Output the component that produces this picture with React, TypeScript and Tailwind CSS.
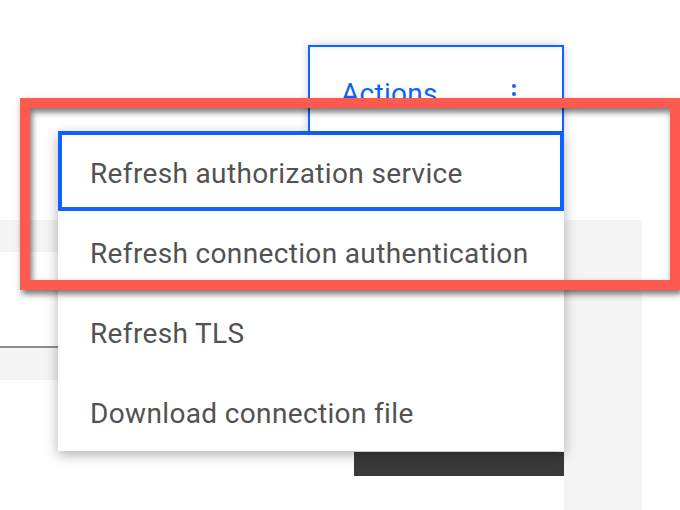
import React from 'react';

const items = [
  'Refresh authorization service',
  'Refresh connection authentication',
  'Refresh TLS',
  'Download connection file',
];

const KebabIcon: React.FC = () => (
  <svg width="4" height="20" viewBox="0 0 4 20" className="block">
    <circle cx="2" cy="2" r="2" fill="#0f62fe" />
    <circle cx="2" cy="10" r="2" fill="#0f62fe" />
    <circle cx="2" cy="18" r="2" fill="#0f62fe" />
  </svg>
);

const App: React.FC = () => {
  return (
    <div className="relative w-[680px] h-[510px] overflow-hidden bg-white font-['Roboto',sans-serif]">
      {/* page underneath the menu */}
      <div className="flex pt-[220px] h-full">
        <div className="flex flex-col w-[564px]">
          <div className="h-[32px] bg-[#f4f4f4]" />
          <div className="h-[94px]" />
          <div className="h-[2px] bg-[#8d8d8d]" />
          <div className="h-[32px] bg-[#f4f4f4]" />
          <div className="h-[72px]" />
          <div className="ml-[354px] h-[24px] bg-[#393939]" />
        </div>
        <div className="w-[78px] bg-[#f4f4f4]" />
      </div>

      {/* overflow menu */}
      <div className="absolute left-[58px] top-[131px] w-[506px] z-10 bg-white shadow-[0_4px_12px_rgba(0,0,0,0.3)]">
        {items.map((label, i) => (
          <div
            key={label}
            className={`h-[80px] flex items-center pl-[28px] pt-[6px] border-4 text-[28px] tracking-[0.35px] text-[#525252] ${
              i === 0 ? 'border-[#0f62fe]' : 'border-transparent'
            }`}
          >
            {label}
          </div>
        ))}
      </div>

      {/* trigger button */}
      <div className="absolute left-[308px] top-[45px] w-[256px] h-[86px] z-20 bg-white border-2 border-b-0 border-[#0f62fe] shadow-[0_0_8px_rgba(0,0,0,0.22)]">
        <div className="h-full pt-[10px] pl-[31px] pr-[46px] flex items-center justify-between shadow-[inset_0_4px_4px_-3px_rgba(0,0,0,0.08)]">
          <span className="text-[28px] tracking-[0.3px] text-[#0f62fe]">Actions</span>
          <KebabIcon />
        </div>
      </div>

      {/* annotation frame */}
      <div className="absolute left-[20px] top-[98px] w-[660px] h-[192px] z-30 border-[10px] border-[#ff5a4f] drop-shadow-[2px_4px_3px_rgba(0,0,0,0.55)]" />
    </div>
  );
};

export default App;
